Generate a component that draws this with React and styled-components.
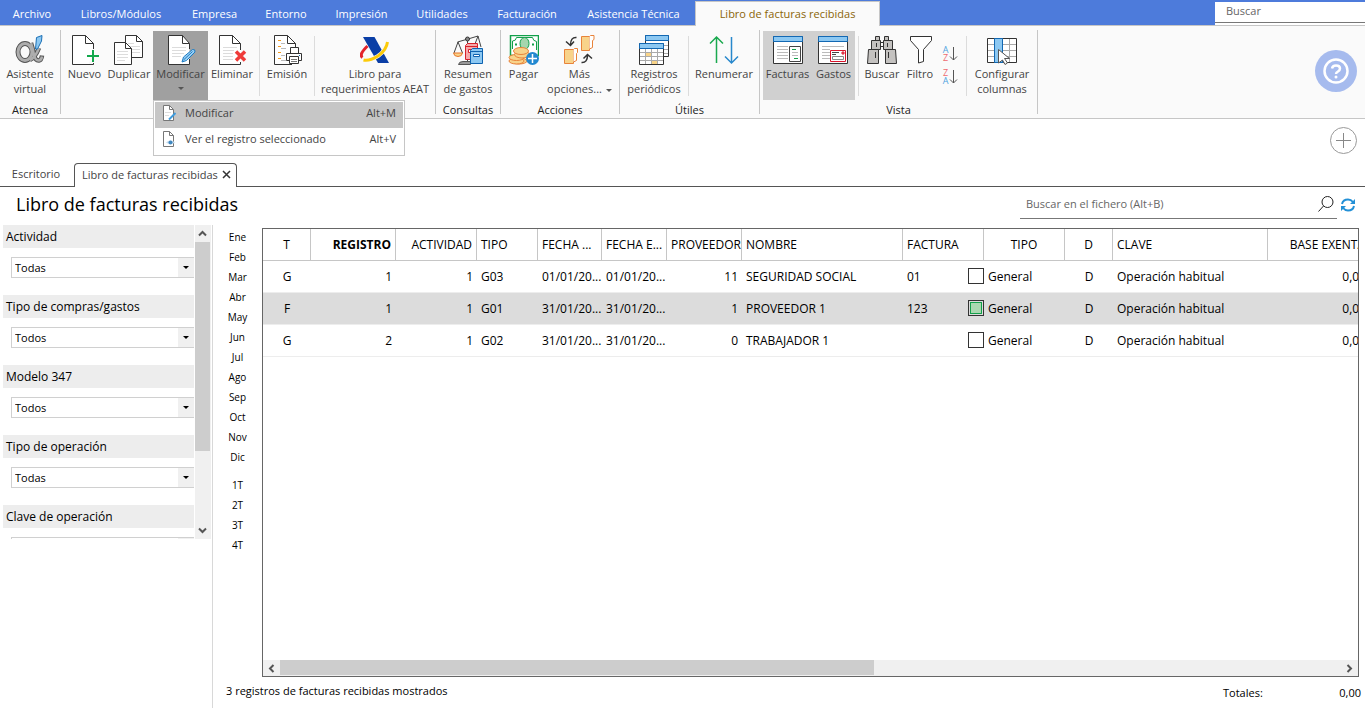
import React, { useState } from 'react'
import styled, { createGlobalStyle, css } from 'styled-components'

const menus = [
    { name: 'Archivo', width: 64 },
    { name: 'Libros/Módulos', width: 114 },
    { name: 'Empresa', width: 73 },
    { name: 'Entorno', width: 70 },
    { name: 'Impresión', width: 81 },
    { name: 'Utilidades', width: 80 },
    { name: 'Facturación', width: 90 },
    { name: 'Asistencia Técnica', width: 123 },
]

const filters = [
    { id: 'actividad', label: 'Actividad', value: 'Todas' },
    { id: 'compras', label: 'Tipo de compras/gastos', value: 'Todos' },
    { id: 'modelo', label: 'Modelo 347', value: 'Todos' },
    { id: 'operacion', label: 'Tipo de operación', value: 'Todas' },
    { id: 'clave', label: 'Clave de operación', value: 'Todas' },
]

const months = ['Ene', 'Feb', 'Mar', 'Abr', 'May', 'Jun', 'Jul', 'Ago', 'Sep', 'Oct', 'Nov', 'Dic']
const quarters = ['1T', '2T', '3T', '4T']

const columns = [
    { key: 't', title: 'T', width: 48, align: 'center' },
    { key: 'registro', title: 'REGISTRO', width: 85, align: 'right', bold: true },
    { key: 'actividad', title: 'ACTIVIDAD', width: 81, align: 'right' },
    { key: 'tipo', title: 'TIPO', width: 61 },
    { key: 'fecha', title: 'FECHA ...', width: 64 },
    { key: 'fechaE', title: 'FECHA E...', width: 65 },
    { key: 'proveedor', title: 'PROVEEDOR', width: 75, align: 'right' },
    { key: 'nombre', title: 'NOMBRE', width: 161 },
    { key: 'factura', title: 'FACTURA', width: 81 },
    { key: 'tipoOp', title: 'TIPO', width: 81, align: 'center' },
    { key: 'd', title: 'D', width: 48, align: 'center' },
    { key: 'clave', title: 'CLAVE', width: 155 },
    { key: 'base', title: 'BASE EXENTA', width: 102, align: 'right' },
]

const records = [
    { t: 'G', registro: 1, actividad: 1, tipo: 'G03', fecha: '01/01/20...', fechaE: '01/01/20...', proveedor: 11, nombre: 'SEGURIDAD SOCIAL', factura: '01', tipoOp: 'General', d: 'D', clave: 'Operación habitual', base: '0,00' },
    { t: 'F', registro: 1, actividad: 1, tipo: 'G01', fecha: '31/01/20...', fechaE: '31/01/20...', proveedor: 1, nombre: 'PROVEEDOR 1', factura: '123', tipoOp: 'General', d: 'D', clave: 'Operación habitual', base: '0,00' },
    { t: 'G', registro: 2, actividad: 1, tipo: 'G02', fecha: '31/01/20...', fechaE: '31/01/20...', proveedor: 0, nombre: 'TRABAJADOR 1', factura: '', tipoOp: 'General', d: 'D', clave: 'Operación habitual', base: '0,00' },
]

/* ---------- icons ---------- */

const Icon = ({ w = 30, h = 30, children }) => (
    <svg width={w} height={h} viewBox={`0 0 ${w} ${h}`} fill="none" aria-hidden="true">{children}</svg>
)

const AlphaIcon = () => (
    <Icon>
        <ellipse cx="10" cy="17" rx="7" ry="8.500" stroke="#555" strokeWidth="5" />
        <path d="M16 8Q18 14 19 20Q20.500 26 24 25.500Q26.500 25 27 20.500M24 13Q20 23 15 25" stroke="#555" strokeWidth="4.500" />
        <ellipse cx="10" cy="17" rx="7" ry="8.500" stroke="#adadad" strokeWidth="3" />
        <path d="M16 8Q18 14 19 20Q20.500 26 24 25.500Q26.500 25 27 21.500M24 13Q20 23 15 25" stroke="#adadad" strokeWidth="2.500" />
        <path d="M21.500 2.500L27 .5L26.500 6L22.500 14H20.500Z" fill="#8cc8f2" stroke="#1b6fb5" />
    </Icon>
)

const NewIcon = () => (
    <Icon w={31}>
        <path d="M24.500 14V8.500L16.500 .5H3.500V29.500H19.500" fill="#fff" />
        <path d="M24.500 14V8.500L16.500 .5H3.500V29.500H24.500V28M16.500 .5V8.500H24.500" stroke="#333" />
        <path d="M18 21H30M24 15V27" stroke="#12a84b" strokeWidth="2" />
    </Icon>
)

const DuplicateIcon = () => (
    <Icon>
        <path d="M11.500 22.500V.5H22.500L28.500 6.500V22.500Z" fill="#fff" stroke="#333" />
        <path d="M22.500 .5V6.500H28.500" stroke="#333" />
        <path d="M14 8.500H20M14 11.500H26M18 14.500H26M18 17.500H26" stroke="#dcdcdc" />
        <path d="M.5 29.500V7.500H11.500L17.500 13.500V29.500Z" fill="#fff" stroke="#333" />
        <path d="M11.500 7.500V13.500H17.500" stroke="#333" />
        <path d="M3 16.500H14M3 19.500H14M3 22.500H14M3 25.500H11" stroke="#dcdcdc" />
    </Icon>
)

const EditIcon = () => (
    <Icon w={31}>
        <path d="M24.500 14V8.500L17.500 .5H3.500V29.500H24.500V24" fill="#fff" stroke="#333" />
        <path d="M17.500 .5V8.500H24.500" stroke="#333" />
        <path d="M7 12.500H21M7 15.500H21M7 18.500H19M7 21.500H16" stroke="#dcdcdc" />
        <path d="M17 27L18.500 22L27.500 14.500Q30.500 14 30 17L21.500 25.500Z" fill="#9ad0f5" stroke="#1c7cc4" />
        <path d="M18.500 25L27.500 16.500" stroke="#1c7cc4" />
    </Icon>
)

const DeleteIcon = () => (
    <Icon>
        <path d="M23.500 15V8.500L15.500 .5H2.500V29.500H23.500V27" fill="#fff" stroke="#333" />
        <path d="M15.500 .5V8.500H23.500" stroke="#333" />
        <path d="M6 12.500H20M6 15.500H17M6 18.500H16M6 21.500H16M6 24.500H16" stroke="#dcdcdc" />
        <path d="M19 16.500L28 25.500M28 16.500L19 25.500" stroke="#ef3b39" strokeWidth="3.500" />
    </Icon>
)

const PrintIcon = () => (
    <Icon>
        <path d="M23.500 13V8.500L15.500 .5H2.500V29.500H20" fill="#fff" stroke="#333" />
        <path d="M15.500 .5V8.500H23.500" stroke="#333" />
        <path d="M6 5.500H9M6 11.500H9M6 17.500H9M6 23.500H9" stroke="#f29a1f" />
        <path d="M9 8.500H13M9 13.500H14M9 20.500H13M9 25.500H14" stroke="#bbb" />
        <path d="M18.500 18V12.500H26.500V18" fill="#fff" stroke="#333" />
        <path d="M14.500 18.500H29.500V25.500H14.500Z" fill="#fff" stroke="#333" />
        <path d="M17.500 21.500H26.500V28.500H17.500Z" fill="#fff" stroke="#333" />
        <path d="M19 24.500H25M19 26.500H25" stroke="#777" />
        <path d="M27 20.500H28" stroke="#1c7cc4" />
    </Icon>
)

const TaxAgencyIcon = () => (
    <Icon>
        <path d="M7.500 11Q-1.500 19.500 2.500 22.500" stroke="#e3242b" strokeWidth="3" />
        <path d="M3 2H14.500L29 28H18Z" fill="#0a3ea6" />
        <path d="M27.500 7Q26.500 15 18 21Q9 26.500 3.500 25" stroke="#fafafa" strokeWidth="4" />
        <path d="M27.500 7Q26.500 15 18 21Q9 26.500 3.500 25" stroke="#fccb0a" strokeWidth="3" />
    </Icon>
)

const SummaryIcon = () => (
    <Icon>
        <path d="M4.500 7L15 4L25 1M5 7L1 18M5 7L9.500 18M25 1L28 12M25 1L22 9M14.500 6V26" stroke="#444" />
        <circle cx="14.500" cy="4" r="2" fill="#888" stroke="#333" />
        <path d="M.5 18H9.500Q9 21.500 5 21.500Q1 21.500 .5 18Z" fill="#f8d38a" stroke="#e8762c" />
        <path d="M5.500 29.500Q6 26.500 10 26.500H17.500V29.500Z" fill="#999" stroke="#555" />
        <path d="M12.500 10.500L14.500 8.500H24.500V24.500H12.500Z" fill="#f5a9a9" stroke="#d8202a" />
        <path d="M12.500 11.500H24.500" stroke="#d8202a" />
        <path d="M15.500 14.500H21.500V17.500H15.500Z" fill="#fff" stroke="#d8202a" />
        <path d="M17.500 15.500L19.500 13.500H29.500V28.500H17.500Z" fill="#8cc8f2" stroke="#0d62b0" />
        <path d="M17.500 16.500H29.500" stroke="#0d62b0" />
        <path d="M20.500 19.500H26.500V21.500H20.500Z" fill="#fff" stroke="#0d62b0" />
    </Icon>
)

const PayIcon = () => (
    <Icon w={31}>
        <path d="M2.500 .5H30.500V20.500H2.500Z" fill="#fff" stroke="#12a04a" strokeWidth="1.500" />
        <path d="M4.500 6Q8 6 8.500 2.500H24.500Q25 6 28.500 6.500V15M4.500 6V14" stroke="#12a04a" />
        <ellipse cx="16.500" cy="8.500" rx="4.500" ry="6" fill="#a5d6ae" stroke="#12a04a" />
        <path d="M7 9.500H9M24 9.500H26" stroke="#12a04a" strokeWidth="2" />
        <g fill="#f8d38a" stroke="#e8833a">
            <ellipse cx="11" cy="26" rx="8" ry="3" />
            <ellipse cx="8.500" cy="26" rx="7.500" ry="3" />
            <ellipse cx="8.500" cy="22.500" rx="7.500" ry="3" />
            <ellipse cx="14" cy="19.500" rx="7.500" ry="3.500" />
            <ellipse cx="13" cy="16" rx="7.500" ry="3.500" />
        </g>
        <circle cx="24.500" cy="23.500" r="6.500" fill="#2288d0" />
        <path d="M20 23.500H29M24.500 19V28" stroke="#fff" strokeWidth="1.500" />
    </Icon>
)

const MoreIcon = () => (
    <Icon w={31}>
        <g fill="#f8d38a" stroke="#e8833a">
            <path d="M17.500 1.500H25.500V15.500H17.500Z" />
            <path d="M25.500 1.500L26.500 .5H30V4.500L28.500 5.500V12.500L25.500 14" fill="#fff" />
            <path d="M.5 14.500H9.500V28.500H.5Z" />
            <path d="M9.500 14.500L10.500 13.500H13.500V17.500L12.500 18.500V25.500L9.500 27" fill="#fff" />
        </g>
        <path d="M12.500 2.500Q6.500 2 6.500 10M2 6.500L6.500 10.500L10 6.500" stroke="#333" strokeWidth="1.500" />
        <path d="M17.500 27.500Q23.500 28 23.500 20M19.500 23.500L23.500 19.500L28 23.500" stroke="#333" strokeWidth="1.500" />
    </Icon>
)

const TablesIcon = () => (
    <Icon>
        <path d="M6.500 .5H29.500V21.500H6.500Z" fill="#fff" stroke="#333" />
        <path d="M6.500 .5H29.500V5.500H6.500Z" fill="#8cc8f2" stroke="#1268b3" />
        <path d="M25 10.500H29M25 14.500H29M25 18.500H29" stroke="#aaa" />
        <path d="M.5 8.500H24.500V29.500H.5Z" fill="#fff" stroke="#333" />
        <path d="M7 18H12V21H7ZM12 26H18V29H12Z" fill="#f9d488" />
        <path d="M1 17.500H24M1 21.500H24M1 25.500H24M6.500 14V29M12.500 14V29M18.500 14V29" stroke="#aaa" />
        <path d="M.5 8.500H24.500V13.500H.5Z" fill="#8cc8f2" stroke="#1268b3" />
    </Icon>
)

const RenumberIcon = () => (
    <Icon>
        <path d="M7.500 28V2M1 8.500L7.500 2L14 8.500" stroke="#1aa94f" strokeWidth="1.500" />
        <path d="M22.500 2V28M16 21.500L22.500 28L29 21.500" stroke="#2888cc" strokeWidth="1.500" />
    </Icon>
)

const InvoicesIcon = () => (
    <Icon w={31}>
        <path d="M1.500 1.500H30.500V28.500H1.500Z" fill="#fff" stroke="#333" />
        <path d="M1.500 1.500H30.500V6.500H1.500Z" fill="#8cc8f2" stroke="#1268b3" />
        <path d="M5 11.500H16M5 14.500H16M5 17.500H16M5 20.500H16M5 23.500H16" stroke="#bbb" />
        <path d="M17.500 11.500H28.500V26.500H17.500Z" fill="#fff" stroke="#444" />
        <path d="M20 14.500H24M22 23.500H26" stroke="#12a04a" strokeWidth="1" />
        <path d="M20 17.500H26M20 20.500H26" stroke="#bbb" />
    </Icon>
)

const ExpensesIcon = () => (
    <Icon w={31}>
        <path d="M.5 1.500H29.500V28.500H.5Z" fill="#fff" stroke="#333" />
        <path d="M.5 1.500H29.500V6.500H.5Z" fill="#8cc8f2" stroke="#1268b3" />
        <path d="M4 11.500H26M4 14.500H12M4 17.500H12M4 20.500H12M4 23.500H12" stroke="#bbb" />
        <path d="M12.500 15.500H27.500V26.500H12.500Z" fill="#fff" stroke="#d9142b" />
        <path d="M14.500 21.500H25.500V24.500H14.500Z" stroke="#888" />
        <path d="M14 17.500H21M14 19.500H18" stroke="#444" />
        <path d="M24 17H26V19H24Z" fill="#f19a9a" stroke="#d9142b" />
    </Icon>
)

const BinocularsIcon = () => (
    <Icon>
        <g fill="#c4c2c0" stroke="#333">
            <path d="M12.500 7.500H17.500V11.500H12.500Z" fill="#fff" />
            <path d="M8.500 1.500H12.500V5.500H8.500ZM17.500 1.500H21.500V5.500H17.500Z" />
            <path d="M4.500 5.500H13.500V14.500H4.500ZM16.500 5.500H25.500V14.500H16.500Z" />
            <path d="M1.500 14.500H11.500V28.500H.5ZM18.500 14.500H28.500L29.500 28.500H18.500Z" />
        </g>
        <path d="M9.500 8V12M20.500 8V12M8.500 17V23M21.500 17V23" stroke="#333" />
    </Icon>
)

const FilterIcon = () => (
    <Icon>
        <path d="M5.500 1.500H26.500V5.500L18.500 14.500V26.500L13.500 28V14.500L5.500 5.500Z" fill="#fff" stroke="#333" />
    </Icon>
)

const ColumnsIcon = () => (
    <Icon>
        <path d="M.5 3.500H29.500V27.500H.5Z" fill="#fff" />
        <path d="M1 9.500H29M1 15.500H29M1 21.500H29M22.500 4V27" stroke="#aaa" />
        <path d="M.5 3.500H29.500V27.500H.5Z" stroke="#333" />
        <path d="M7.500 3.500H15.500V27.500H7.500Z" fill="#8cc8f2" stroke="#1268b3" />
        <path d="M11.500 14.500L22.500 23.500H17.500L20.500 28L18 29.500L15.500 25L11.500 28Z" fill="#fff" stroke="#555" />
    </Icon>
)

const PageSmallIcon = ({ view }) => (
    <Icon w={16} h={16}>
        <path d="M2.500 .5H8.500L12.500 4.500V15.500H2.500Z" fill="#fff" stroke="#777" />
        <path d="M8.500 .5V4.500H12.500" stroke="#777" />
        {view ? (
            <>
                <path d="M5 11.500Q9.500 7.500 14 11.500Q9.500 15 5 11.500Z" fill="#c5dcef" />
                <circle cx="9.500" cy="11.500" r="2" fill="#3f87bf" />
            </>
        ) : (
            <>
                <path d="M4 7.500H10M4 10.500H8" stroke="#ddd" />
                <path d="M8 14.500L14.500 8" stroke="#3f9bdc" strokeWidth="2" />
            </>
        )}
    </Icon>
)

const Chevron = ({ d }) => (
    <Icon w={9} h={9}><path d={d} stroke="#555" strokeWidth="2" /></Icon>
)

const HelpIcon = () => (
    <Icon w={42} h={42}>
        <circle cx="21" cy="21" r="21" fill="#a6bbee" />
        <circle cx="21" cy="21" r="11.500" stroke="#fff" strokeWidth="2.500" />
        <path d="M17 18.500Q17.500 15.500 21 15.500Q25 15.500 25 18.500Q25 20 23 21.500Q21 22.500 21 24" stroke="#fff" strokeWidth="2.500" />
        <circle cx="21" cy="27" r="1.500" fill="#fff" />
    </Icon>
)

const Tool = ({ icon, lines, width, state, arrow }) => (
    <ToolButton type="button" $width={width} $state={state}>
        {icon}
        <ToolText>
            {lines.map((line, i) => (
                <span key={line}>{line}{arrow && i === lines.length - 1 && lines.length > 1 ? <Caret $side /> : null}</span>
            ))}
            {arrow && lines.length === 1 ? <Caret /> : null}
        </ToolText>
    </ToolButton>
)

const SortTool = ({ letters, label }) => (
    <SortButton type="button" aria-label={label}>
        <SortLetters>
            {letters.map(letter => <SortLetter key={letter} $letter={letter}>{letter}</SortLetter>)}
        </SortLetters>
        <Icon w={9} h={16}><path d="M4.500 1V14M1 10.500L4.500 14L8 10.500" stroke="#555" /></Icon>
    </SortButton>
)

function App() {

    const [selected, setSelected] = useState(1)

    return (
        <>
            <GlobalStyle />
            <Page>
                <MenuBar>
                    {menus.map(menu => <MenuButton key={menu.name} type="button" $width={menu.width}>{menu.name}</MenuButton>)}
                    <ActiveMenu type="button">Libro de facturas recibidas</ActiveMenu>
                    <TopSearch type="text" placeholder="Buscar" aria-label="Buscar" />
                </MenuBar>

                <Ribbon>
                    <Group>
                        <Tools>
                            <Tool width={54} icon={<AlphaIcon />} lines={['Asistente', 'virtual']} />
                        </Tools>
                        <GroupName>Atenea</GroupName>
                    </Group>
                    <Group>
                        <Tools>
                            <Tool width={41} icon={<NewIcon />} lines={['Nuevo']} />
                            <Tool width={48} icon={<DuplicateIcon />} lines={['Duplicar']} />
                            <MenuAnchor>
                                <Tool width={55} icon={<EditIcon />} lines={['Modificar']} state="open" arrow />
                                <Dropdown role="menu">
                                    <DropdownItem type="button" role="menuitem" $active>
                                        <PageSmallIcon /><span>Modificar</span><Shortcut>Alt+M</Shortcut>
                                    </DropdownItem>
                                    <DropdownItem type="button" role="menuitem">
                                        <PageSmallIcon view /><span>Ver el registro seleccionado</span><Shortcut>Alt+V</Shortcut>
                                    </DropdownItem>
                                </Dropdown>
                            </MenuAnchor>
                            <Tool width={48} icon={<DeleteIcon />} lines={['Eliminar']} />
                            <Separator />
                            <Tool width={48} icon={<PrintIcon />} lines={['Emisión']} />
                            <Separator />
                            <Tool width={114} icon={<TaxAgencyIcon />} lines={['Libro para', 'requerimientos AEAT']} />
                        </Tools>
                    </Group>
                    <Group>
                        <Tools>
                            <Tool width={58} icon={<SummaryIcon />} lines={['Resumen', 'de gastos']} />
                        </Tools>
                        <GroupName>Consultas</GroupName>
                    </Group>
                    <Group>
                        <Tools>
                            <Tool width={39} icon={<PayIcon />} lines={['Pagar']} />
                            <Tool width={73} icon={<MoreIcon />} lines={['Más', 'opciones...']} arrow />
                        </Tools>
                        <GroupName>Acciones</GroupName>
                    </Group>
                    <Group>
                        <Tools>
                            <Tool width={62} icon={<TablesIcon />} lines={['Registros', 'periódicos']} />
                            <Separator />
                            <Tool width={64} icon={<RenumberIcon />} lines={['Renumerar']} />
                        </Tools>
                        <GroupName>Útiles</GroupName>
                    </Group>
                    <Group>
                        <Tools>
                            <Tool width={49} icon={<InvoicesIcon />} lines={['Facturas']} state="on" />
                            <Tool width={43} icon={<ExpensesIcon />} lines={['Gastos']} state="on" />
                            <Separator />
                            <Tool width={40} icon={<BinocularsIcon />} lines={['Buscar']} />
                            <Tool width={36} icon={<FilterIcon />} lines={['Filtro']} />
                            <SortButtons>
                                <SortTool letters={['A', 'Z']} label="Orden ascendente" />
                                <SortTool letters={['Z', 'A']} label="Orden descendente" />
                            </SortButtons>
                            <Separator />
                            <Tool width={64} icon={<ColumnsIcon />} lines={['Configurar', 'columnas']} />
                        </Tools>
                        <GroupName>Vista</GroupName>
                    </Group>
                    <HelpButton type="button" aria-label="Ayuda"><HelpIcon /></HelpButton>
                </Ribbon>

                <AddRow>
                    <PlainButton type="button" aria-label="Añadir">
                        <Icon w={27} h={27}>
                            <circle cx="13.500" cy="13.500" r="13" stroke="#999" />
                            <path d="M6 13.500H21M13.500 6V21" stroke="#888" />
                        </Icon>
                    </PlainButton>
                </AddRow>

                <Tabs>
                    <Tab type="button">Escritorio</Tab>
                    <ActiveTab>
                        <TabName type="button">Libro de facturas recibidas</TabName>
                        <PlainButton type="button" aria-label="Cerrar">
                            <Icon w={9} h={9}><path d="M1 1L8 8M8 1L1 8" stroke="#333" strokeWidth="1.500" /></Icon>
                        </PlainButton>
                    </ActiveTab>
                    <TabLine />
                </Tabs>

                <Heading>
                    <h1>Libro de facturas recibidas</h1>
                    <FileSearch>
                        <input type="text" placeholder="Buscar en el fichero (Alt+B)" aria-label="Buscar en el fichero" />
                        <PlainButton type="button" aria-label="Buscar">
                            <Icon w={16} h={16}>
                                <circle cx="9.500" cy="6" r="5.500" stroke="#222" />
                                <path d="M5.500 10L.5 15.500" stroke="#222" />
                            </Icon>
                        </PlainButton>
                    </FileSearch>
                    <PlainButton type="button" aria-label="Actualizar">
                        <Icon w={16} h={16}>
                            <path d="M2 7Q3 2.500 8 2.500Q11 2.500 13 5M14 9Q13 13.500 8 13.500Q5 13.500 3 11" stroke="#2390d6" strokeWidth="2" />
                            <path d="M15 2V7H10ZM1 14V9H6Z" fill="#2390d6" />
                        </Icon>
                    </PlainButton>
                </Heading>

                <Body>
                    <Sidebar>
                        <FilterList>
                            {filters.map(filter => (
                                <FilterItem key={filter.id}>
                                    <label htmlFor={filter.id}>{filter.label}</label>
                                    <SelectBox>
                                        <select id={filter.id} defaultValue={filter.value}>
                                            <option>{filter.value}</option>
                                        </select>
                                        <SelectArrow><Caret $dark /></SelectArrow>
                                    </SelectBox>
                                </FilterItem>
                            ))}
                        </FilterList>
                        <SideScroll>
                            <Chevron d="M1 6.500L4.500 3L8 6.500" />
                            <SideThumb />
                            <Chevron d="M1 2.500L4.500 6L8 2.500" />
                        </SideScroll>
                    </Sidebar>

                    <Content>
                        <Book>
                            <Periods>
                                {months.map(month => <Period key={month} type="button">{month}</Period>)}
                                <PeriodGap />
                                {quarters.map(quarter => <Period key={quarter} type="button">{quarter}</Period>)}
                            </Periods>
                            <Grid>
                                <Table>
                                    <colgroup>
                                        {columns.map(col => <Col key={col.key} $width={col.width} />)}
                                    </colgroup>
                                    <thead>
                                        <tr>
                                            {columns.map(col => <Th key={col.key} $align={col.align} $bold={col.bold}>{col.title}</Th>)}
                                        </tr>
                                    </thead>
                                    <tbody>
                                        {records.map((record, i) => (
                                            <Row key={i} $selected={i === selected} onClick={() => setSelected(i)}>
                                                {columns.map(col => {
                                                    if (col.key === 'factura') {
                                                        return (
                                                            <Td key={col.key} $flush>
                                                                <InvoiceCell>
                                                                    <span>{record.factura}</span>
                                                                    <Check type="checkbox" aria-label={`Registro ${record.nombre}`} checked={i === selected} onChange={() => setSelected(i)} />
                                                                </InvoiceCell>
                                                            </Td>
                                                        )
                                                    }
                                                    const align = col.key === 'tipoOp' ? 'left' : col.align
                                                    return <Td key={col.key} $align={align}>{record[col.key]}</Td>
                                                })}
                                            </Row>
                                        ))}
                                    </tbody>
                                </Table>
                                <GridScroll>
                                    <Chevron d="M6.500 1L3 4.500L6.500 8" />
                                    <GridTrack><GridThumb /></GridTrack>
                                    <Chevron d="M2.500 1L6 4.500L2.500 8" />
                                </GridScroll>
                            </Grid>
                        </Book>
                        <Footer>
                            <span>3 registros de facturas recibidas mostrados</span>
                            <Totals><span>Totales:</span><span>0,00</span></Totals>
                        </Footer>
                    </Content>
                </Body>
            </Page>
        </>
    )
}

export default App

const GlobalStyle = createGlobalStyle`
    * {
        box-sizing: border-box;
    }

    body {
        margin: 0;
        background: #fff;
        color: #000;
        font-family: "Open Sans", "Noto Sans", sans-serif;
        font-size: 11px;
    }

    button, input, select {
        font: inherit;
        color: inherit;
        border: 0;
        padding: 0;
        margin: 0;
        background: none;
        outline: none;
    }

    svg {
        display: block;
        flex: none;
    }
`

const Page = styled.div`
    display: flex;
    flex-direction: column;
    min-height: 100vh;
    overflow: hidden;
    white-space: nowrap;
`

const PlainButton = styled.button`
    display: flex;
    align-items: center;
    justify-content: center;
`

const Caret = styled.i`
    display: inline-block;
    border: solid transparent;
    border-width: 3px 3px 0;
    border-top-color: ${props => (props.$dark ? '#000' : '#555')};
    ${props => props.$side && css`
        margin-left: 4px;
        vertical-align: middle;
    `}
`

const MenuBar = styled.nav`
    display: flex;
    height: 26px;
    background: #4d7bdb;
    border-bottom: 1px solid #c6c6c6;
`

const MenuButton = styled.button`
    width: ${props => props.$width}px;
    padding-top: 2px;
    color: #fff;
`

const ActiveMenu = styled.button`
    width: 185px;
    margin: 1px 0 -1px;
    padding-bottom: 1px;
    background: #fafafa;
    border: 1px solid #c6c6c6;
    border-bottom: 0;
    color: #8a6508;
`

const TopSearch = styled.input`
    width: 150px;
    margin: 2px 0 2px auto;
    padding: 0 11px 3px;
    background: #fff;
    border-bottom: 1px solid #777;
    box-shadow: 0 2px 0 #fff;

    &::placeholder {
        color: #666;
    }
`

const Ribbon = styled.header`
    display: flex;
    height: 93px;
    background: #fafafa;
    border-bottom: 1px solid #c6c6c6;
    color: #444;
`

const Group = styled.section`
    display: flex;
    flex-direction: column;
    margin: 4px 0;
    padding: 1px 3px 0;
    border-right: 1px solid #c6c6c6;
`

const Tools = styled.div`
    display: flex;
    height: 69px;
`

const GroupName = styled.div`
    color: #222;
    line-height: 20px;
    text-align: center;
`

const stateColors = {
    open: '#a0a0a0',
    on: '#d0d0d0',
}

const ToolButton = styled.button`
    display: flex;
    flex-direction: column;
    align-items: center;
    width: ${props => props.$width}px;
    height: 69px;
    padding-top: 4px;
    background: ${props => stateColors[props.$state] || 'none'};
`

const ToolText = styled.span`
    display: flex;
    flex-direction: column;
    align-items: center;
    padding-top: 1px;
    line-height: 15px;

    > i {
        margin-top: 6px;
    }
`

const Separator = styled.div`
    width: 1px;
    height: 60px;
    margin: 5px 3px 0;
    background: #dcdcdc;
`

const SortButtons = styled.div`
    display: flex;
    flex-direction: column;
    align-items: center;
    gap: 6px;
    width: 25px;
    padding-top: 14px;
`

const SortButton = styled(PlainButton)`
    gap: 1px;
    height: 17px;
`

const SortLetters = styled.span`
    display: flex;
    flex-direction: column;
    font-size: 9px;
    line-height: 8px;
`

const SortLetter = styled.span`
    color: ${props => (props.$letter === 'A' ? '#4fa3e0' : '#ee6a70')};
`

const HelpButton = styled(PlainButton)`
    align-self: center;
    margin: 0 8px 2px auto;
    border-radius: 50%;
`

const MenuAnchor = styled.div`
    position: relative;
`

const Dropdown = styled.div`
    position: absolute;
    top: 69px;
    left: 0;
    z-index: 2;
    width: 252px;
    padding: 1px;
    background: #fff;
    border: 1px solid #c6c6c6;
`

const DropdownItem = styled.button`
    display: flex;
    align-items: center;
    gap: 8px;
    width: 100%;
    height: 26px;
    padding: 0 7px 5px 6px;
    background: ${props => (props.$active ? '#c6c6c6' : '#fff')};
`

const Shortcut = styled.span`
    margin-left: auto;
`

const AddRow = styled.div`
    display: flex;
    justify-content: flex-end;
    padding: 8px 8px 9px;
`

const Tabs = styled.div`
    display: flex;
    height: 24px;
    color: #444;
`

const Tab = styled.button`
    width: 74px;
    padding: 0 2px 3px 0;
    border-bottom: 1px solid #555;
`

const ActiveTab = styled.div`
    display: flex;
    align-items: center;
    gap: 4px;
    width: 163px;
    padding: 0 9px 3px 7px;
    border: 1px solid #555;
    border-bottom: 0;
    border-radius: 4px 4px 0 0;
`

const TabName = styled.button`
    flex: 1;
    text-align: left;
`

const TabLine = styled.div`
    flex: 1;
    border-bottom: 1px solid #555;
`

const Heading = styled.div`
    display: flex;
    align-items: center;
    height: 38px;
    padding: 0 9px 3px 16px;

    h1 {
        flex: 1;
        margin: 0;
        padding-bottom: 1px;
        font-size: 18px;
        font-weight: 400;
    }
`

const FileSearch = styled.div`
    display: flex;
    align-items: center;
    width: 317px;
    height: 28px;
    margin-right: 3px;
    padding: 0 3px 0 6px;
    border-bottom: 1px solid #777;

    input {
        flex: 1;
        padding-bottom: 2px;
    }

    input::placeholder {
        color: #666;
    }
`

const Body = styled.main`
    display: flex;
    flex: 1;
`

const Sidebar = styled.aside`
    display: flex;
    align-items: flex-start;
    width: 213px;
    padding: 0 1px 0 3px;
    border-right: 1px solid #d8d8d8;
`

const FilterList = styled.div`
    flex: 1;
    max-height: 314px;
    overflow: hidden;
    font-size: 12px;
`

const FilterItem = styled.div`
    display: flex;
    flex-direction: column;
    height: 70px;

    label {
        margin-bottom: 9px;
        padding-left: 3px;
        background: #ededed;
        line-height: 23px;
    }
`

const SelectBox = styled.div`
    display: flex;
    height: 21px;
    margin-left: 8px;
    border: 1px solid #d0d0d0;
    border-right: 0;
    font-size: 11px;

    select {
        flex: 1;
        padding-left: 3px;
        appearance: none;
    }
`

const SelectArrow = styled.span`
    display: flex;
    align-items: center;
    justify-content: center;
    width: 16px;
    background: #f0f0f0;
`

const SideScroll = styled.div`
    display: flex;
    flex-direction: column;
    align-items: center;
    width: 16px;
    height: 314px;
    margin-left: 1px;
    padding: 4px 1px 4px 0;
    background: #f0f0f0;
`

const SideThumb = styled.div`
    width: 15px;
    height: 209px;
    margin: 4px 0 auto;
    background: #cdcdcd;
`

const Content = styled.div`
    display: flex;
    flex: 1;
    flex-direction: column;
    min-width: 0;
`

const Book = styled.div`
    display: flex;
    flex: 1;
    padding: 3px 6px 0 0;
`

const Periods = styled.div`
    display: flex;
    flex-direction: column;
    width: 49px;
    font-size: 10px;
`

const Period = styled.button`
    height: 20px;
    padding-bottom: 2px;
`

const PeriodGap = styled.div`
    height: 8px;
`

const Grid = styled.div`
    display: flex;
    flex: 1;
    flex-direction: column;
    min-width: 0;
    overflow: hidden;
    border: 1px solid #666;
`

const Table = styled.table`
    width: 1107px;
    table-layout: fixed;
    border-spacing: 0;
    font-size: 12px;
`

const Col = styled.col`
    width: ${props => props.$width}px;
`

const Th = styled.th`
    height: 32px;
    padding: 0 4px;
    border-right: 1px solid #c6c6c6;
    border-bottom: 1px solid #c6c6c6;
    font-weight: ${props => (props.$bold ? 700 : 400)};
    text-align: ${props => props.$align || 'left'};
`

const Td = styled.td`
    height: 32px;
    padding: ${props => (props.$flush ? '0 0 0 4px' : '0 4px')};
    border-bottom: 1px solid #ededed;
    text-align: ${props => props.$align || 'left'};
`

const Row = styled.tr`
    background: ${props => (props.$selected ? '#dcdcdc' : '#fff')};
`

const InvoiceCell = styled.div`
    display: flex;
    align-items: center;
    justify-content: space-between;
`

const Check = styled.input`
    appearance: none;
    width: 16px;
    height: 16px;
    margin-bottom: 1px;
    background: #fff;
    border: 1px solid #333;

    &:checked {
        background: #a9d8b0;
        box-shadow: inset 0 0 0 1px #dcdcdc, inset 0 0 0 2px #12a04a;
    }
`

const GridScroll = styled.div`
    display: flex;
    align-items: center;
    gap: 4px;
    height: 16px;
    margin-top: auto;
    padding: 0 4px;
    background: #f0f0f0;
`

const GridTrack = styled.div`
    flex: 1;
    height: 15px;
    margin-bottom: 1px;
`

const GridThumb = styled.div`
    width: 56%;
    height: 100%;
    background: #cdcdcd;
`

const Footer = styled.footer`
    display: flex;
    align-items: center;
    height: 31px;
    padding: 0 4px 4px 13px;
`

const Totals = styled.div`
    display: flex;
    justify-content: space-between;
    width: 138px;
    margin-left: auto;
    padding-top: 4px;
`
